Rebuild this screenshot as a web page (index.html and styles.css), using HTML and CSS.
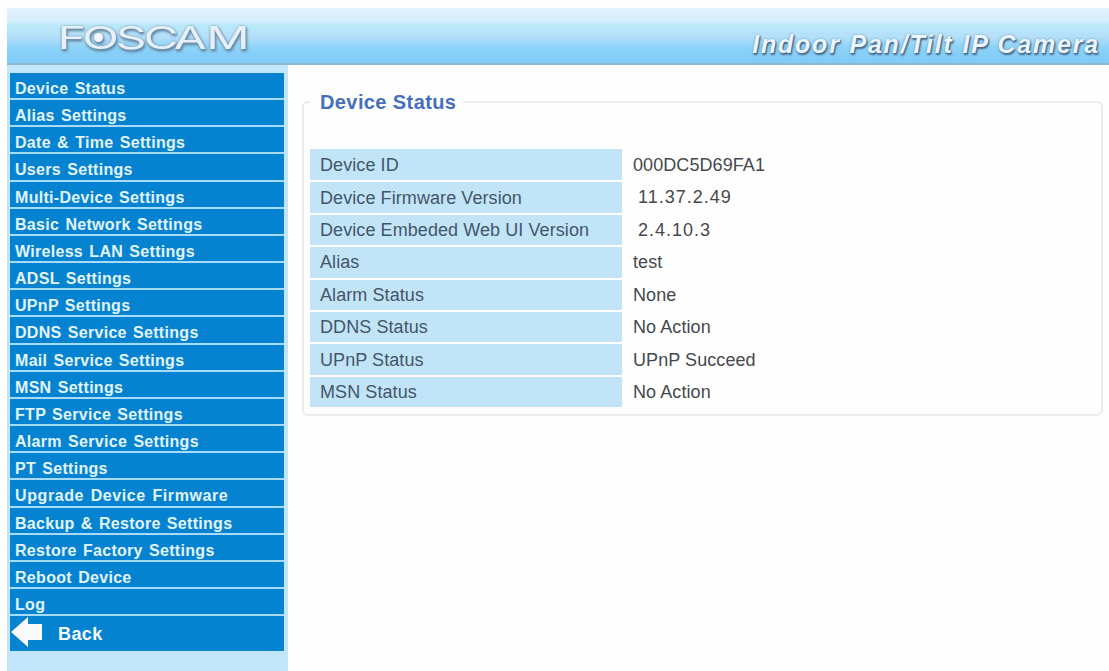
FILE: index.html
```html
<!DOCTYPE html>
<html lang="en">
<head>
    <meta charset="UTF-8">
    <meta name="viewport" content="width=device-width, initial-scale=1.0">
    <title>Indoor Pan/Tilt IP Camera</title>
    <link rel="stylesheet" href="styles.css">
</head>
<body>
    <div class="header">
        <svg class="logo" width="210" height="40" viewBox="0 0 210 40">
            <text class="logo-text" transform="scale(1.55 1)" y="31" x="5.5 21.5 43 61 80.5 101.5">FOSCAM</text>
            <circle cx="49.5" cy="19.5" r="4.5" fill="#f4f8fc"/>
        </svg>
        <h1>Indoor Pan/Tilt IP Camera</h1>
    </div>
    <div class="main">
        <div class="sidebar">
            <a class="item">Device Status</a>
            <a class="item">Alias Settings</a>
            <a class="item">Date &amp; Time Settings</a>
            <a class="item">Users Settings</a>
            <a class="item">Multi-Device Settings</a>
            <a class="item">Basic Network Settings</a>
            <a class="item">Wireless LAN Settings</a>
            <a class="item">ADSL Settings</a>
            <a class="item">UPnP Settings</a>
            <a class="item">DDNS Service Settings</a>
            <a class="item">Mail Service Settings</a>
            <a class="item">MSN Settings</a>
            <a class="item">FTP Service Settings</a>
            <a class="item">Alarm Service Settings</a>
            <a class="item">PT Settings</a>
            <a class="item upgrade">Upgrade Device Firmware</a>
            <a class="item">Backup &amp; Restore Settings</a>
            <a class="item">Restore Factory Settings</a>
            <a class="item">Reboot Device</a>
            <a class="item">Log</a>
            <a class="back">
                <svg width="32" height="30" viewBox="0 0 32 30">
                    <path d="M0 15 L17 0 V7 H31 V23 H17 V30 Z" fill="#fafafa"/>
                </svg>
                <span>Back</span>
            </a>
        </div>
        <div class="content">
            <fieldset>
                <legend>Device Status</legend>
                <table>
                    <tr><th>Device ID</th><td>000DC5D69FA1</td></tr>
                    <tr><th>Device Firmware Version</th><td class="version firmware">11.37.2.49</td></tr>
                    <tr><th>Device Embeded Web UI Version</th><td class="version">2.4.10.3</td></tr>
                    <tr><th>Alias</th><td>test</td></tr>
                    <tr><th>Alarm Status</th><td>None</td></tr>
                    <tr><th>DDNS Status</th><td>No Action</td></tr>
                    <tr><th>UPnP Status</th><td>UPnP Succeed</td></tr>
                    <tr><th>MSN Status</th><td>No Action</td></tr>
                </table>
            </fieldset>
        </div>
    </div>
</body>
</html>
```
FILE: styles.css
```css
* {
    box-sizing: border-box;
}
body {
    font-family: "Liberation Sans", Arial, sans-serif;
    background-color: #fefefe;
    margin: 0;
    padding: 8px 0 0 7px;
    height: 671px;
    display: flex;
    flex-direction: column;
    overflow: hidden;
}
.header {
    height: 57px;
    flex: none;
    display: flex;
    justify-content: space-between;
    padding: 10px 9px 0 42px;
    background: linear-gradient(#e4f2fd 0%, #d8edfd 22%, #b9e9f8 32%, #b5dffa 52%, #8dd3f8 72%, #80cbf8 95%);
    border-bottom: 2px solid #8fb9d3;
}
.logo {
    filter: drop-shadow(0 0 1px #7f9cb4) drop-shadow(1px 2px 1px #5f7f9a);
}
.logo-text {
    font-family: Inter, "Liberation Sans", sans-serif;
    font-size: 31px;
    font-weight: 400;
    fill: #e6f0f9;
}
h1 {
    margin: 13px 0 0;
    font-size: 25px;
    line-height: 26px;
    font-style: italic;
    letter-spacing: 1.8px;
    white-space: nowrap;
    color: #eaf5fd;
    text-shadow: 1px 2px 2px #44688a, 1px 1px 1px #5f84a6, 0 0 2px #6f93b4;
}
.main {
    flex: 1;
    display: flex;
}
.sidebar {
    width: 281px;
    background-color: #c2e5f9;
    padding: 8px 4px 0 3px;
}
.item {
    display: block;
    height: 27.16px;
    padding-left: 5px;
    border-bottom: 2px solid #a6dcfa;
    background-color: #0583d0;
    color: #e2f4fd;
    font-size: 16px;
    font-weight: bold;
    line-height: 31px;
    letter-spacing: 0.3px;
    word-spacing: 1.5px;
    white-space: nowrap;
}
.upgrade {
    letter-spacing: 0.6px;
}
.back {
    display: flex;
    height: 35px;
    padding: 1px 0 0 1px;
    background-color: #0583d0;
    color: #f4fbff;
    font-size: 18px;
    font-weight: bold;
    line-height: 35px;
}
.back span {
    margin-left: 15px;
    letter-spacing: 0.4px;
}
.content {
    flex: 1;
    padding: 26px 6px 0 14px;
}
fieldset {
    margin: 0;
    height: 325px;
    padding: 37px 30px 0 6px;
    border: 2px solid #ecebe6;
    border-radius: 6px;
}
legend {
    padding: 0 7px 0 10px;
    color: #456fba;
    font-size: 20px;
    font-weight: bold;
    line-height: 22px;
    letter-spacing: 0.4px;
}
table {
    width: 100%;
    margin-top: -1px;
    border-collapse: collapse;
    color: #45494d;
    font-size: 18px;
}
th, td {
    height: 32.4px;
    padding: 0 10px;
    text-align: left;
    font-weight: normal;
    line-height: 28px;
    letter-spacing: 0.08px;
    border-bottom: 2px solid #fefefe;
}
th {
    width: 312px;
    background-color: #c2e4f7;
    color: #42566b;
}
td {
    padding-left: 11px;
}
td.version {
    padding-left: 16px;
    letter-spacing: 1px;
}
td.firmware {
    padding-bottom: 2px;
}
```
